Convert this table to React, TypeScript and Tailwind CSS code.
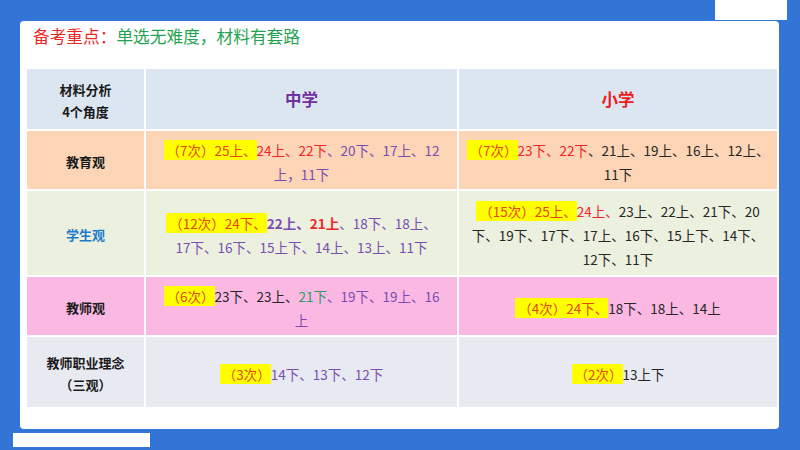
import React from "react";

const HL = ({ children }: { children: React.ReactNode }) => (
  <span className="bg-[#ffff00] text-[#e5470f] pl-[3px]">{children}</span>
);
const R = ({ children, b }: { children: React.ReactNode; b?: boolean }) => (
  <span className={`text-[#f22424] ${b ? "font-bold" : ""}`}>{children}</span>
);
const P = ({ children, b }: { children: React.ReactNode; b?: boolean }) => (
  <span className={`text-[#7a4db3] ${b ? "font-bold text-[#6a35a8]" : ""}`}>{children}</span>
);
const D = ({ children }: { children: React.ReactNode }) => (
  <span className="text-[#262626]">{children}</span>
);
const G = ({ children }: { children: React.ReactNode }) => (
  <span className="text-[#2e9a62]">{children}</span>
);

const Cell = ({ bg, children }: { bg: string; children: React.ReactNode }) => (
  <div className={`${bg} flex items-center justify-center text-center text-[13.5px] leading-[24px] whitespace-nowrap pt-[4px]`}>
    <div>{children}</div>
  </div>
);

const Label = ({ bg, children, color = "text-[#1a1a1a]" }: { bg: string; children: React.ReactNode; color?: string }) => (
  <div className={`${bg} flex items-center justify-center text-center text-[13px] leading-[22px] font-bold pt-[3px] ${color}`}>
    <div>{children}</div>
  </div>
);

export default function App() {
  return (
    <div
      className="relative w-[800px] h-[450px] bg-[#3375d6] overflow-hidden"
      style={{ fontFamily: '"Noto Sans CJK SC", "Noto Sans", sans-serif' }}
    >
      <div className="absolute left-[715px] top-0 w-[72px] h-[20px] bg-white" />
      <div className="absolute left-[13px] top-[433px] w-[137px] h-[14px] bg-white" />
      <div className="absolute left-[20px] top-[21px] w-[759px] h-[408px] bg-white rounded-[4px] flex flex-col">
        <div className="pl-[13px] pt-[2px] h-[28px] text-[16.7px] leading-[26px]">
          <span className="text-[#ee2424]">备考重点：</span>
          <span className="text-[#1fa34f]">单选无难度，材料有套路</span>
        </div>
        <div className="ml-[7px] mt-[20px] w-[750px] grid grid-cols-[117px_311px_1fr] grid-rows-[60px_58px_84px_58px_70px] gap-[2px]">
          <Label bg="bg-[#dce6f1]">
            材料分析
            <br />
            4个角度
          </Label>
          <div className="bg-[#dce6f1] flex items-center justify-center text-[16.5px] font-bold text-[#7030a0]">中学</div>
          <div className="bg-[#dce6f1] flex items-center justify-center text-[16.5px] font-bold text-[#ee1c1c]">小学</div>

          <Label bg="bg-[#fbd5b6]">教育观</Label>
          <Cell bg="bg-[#fbd5b6]">
            <HL>（7次）25上、</HL>
            <R>24上、22下</R>
            <P>、20下、17上、12</P>
            <br />
            <P>上，11下</P>
          </Cell>
          <Cell bg="bg-[#fbd5b6]">
            <HL>（7次）</HL>
            <R>23下、22下</R>
            <D>、21上、19上、16上、12上、</D>
            <br />
            <D>11下</D>
          </Cell>

          <Label bg="bg-[#ebf0df]" color="text-[#1e7cc8]">学生观</Label>
          <Cell bg="bg-[#ebf0df]">
            <HL>（12次）24下、</HL>
            <P b>22上、</P>
            <R b>21上</R>
            <P>、18下、18上、</P>
            <br />
            <P>17下、16下、15上下、14上、13上、11下</P>
          </Cell>
          <Cell bg="bg-[#ebf0df]">
            <HL>（15次）25上、</HL>
            <R>24上、</R>
            <D>23上、22上、21下、20</D>
            <br />
            <D>下、19下、17下、17上、16下、15上下、14下、</D>
            <br />
            <D>12下、11下</D>
          </Cell>

          <Label bg="bg-[#fbb8e2]">教师观</Label>
          <Cell bg="bg-[#fbb8e2]">
            <HL>（6次）</HL>
            <D>23下、23上、</D>
            <G>21下</G>
            <P>、19下、19上、16</P>
            <br />
            <P>上</P>
          </Cell>
          <Cell bg="bg-[#fbb8e2]">
            <HL>（4次）24下、</HL>
            <D>18下、18上、14上</D>
          </Cell>

          <Label bg="bg-[#e8eaf2]">
            教师职业理念
            <br />
            （三观）
          </Label>
          <Cell bg="bg-[#e8eaf2]">
            <HL>（3次）</HL>
            <P>14下、13下、12下</P>
          </Cell>
          <Cell bg="bg-[#e8eaf2]">
            <HL>（2次）</HL>
            <D>13上下</D>
          </Cell>
        </div>
      </div>
    </div>
  );
}
